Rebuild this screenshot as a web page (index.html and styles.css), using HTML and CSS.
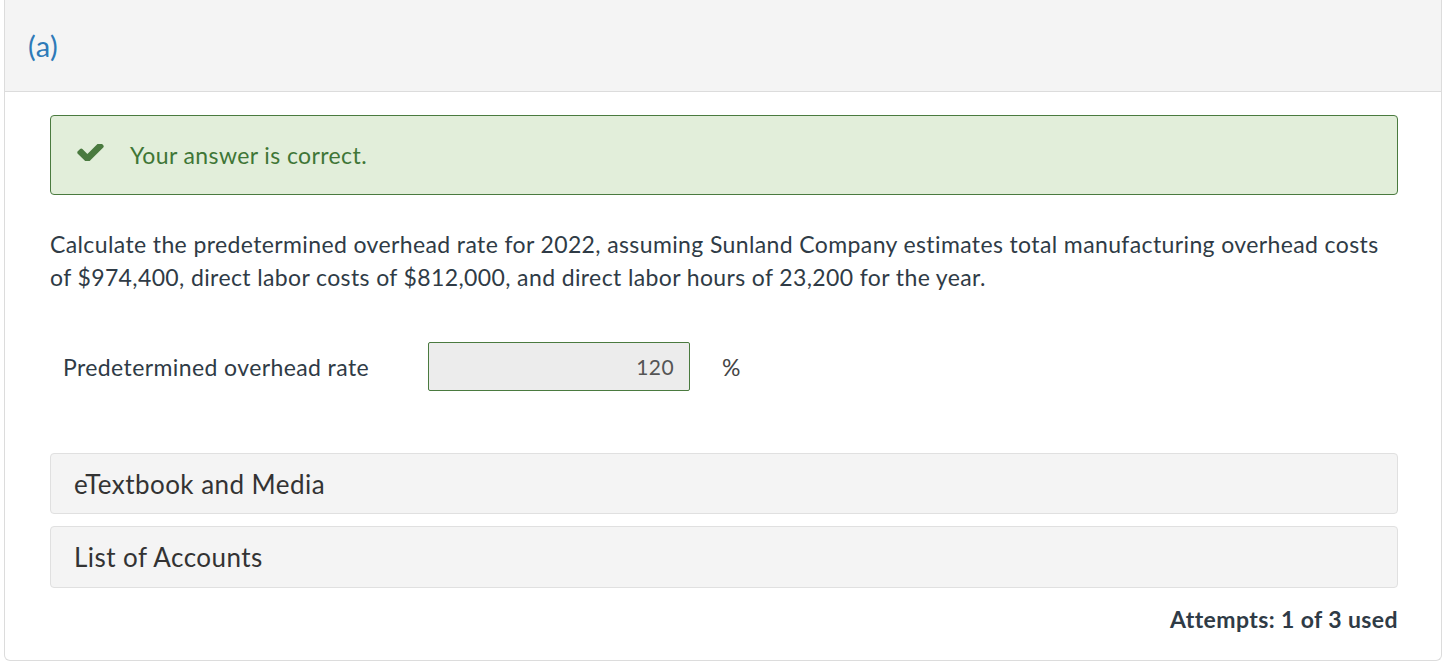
FILE: index.html
```html
<!DOCTYPE html>
<html lang="en">
<head>
<meta charset="utf-8">
<title>Question (a)</title>
<link rel="stylesheet" href="styles.css">
</head>
<body>
<div class="card">
  <div class="card-header">(a)</div>
  <div class="card-body">
    <div class="alert">
      <svg class="check" viewBox="121 430 1550 996" width="27" height="17" aria-hidden="true"><path fill="#4a7a3f" d="M1671 566q0 40-28 68l-724 724-136 136q-28 28-68 28t-68-28l-136-136-362-362q-28-28-28-68t28-68l136-136q28-28 68-28t68 28l294 295 656-657q28-28 68-28t68 28l136 136q28 28 28 68z"/></svg>
      <span class="alert-text">Your answer is correct.</span>
    </div>
    <p class="question">Calculate the predetermined overhead rate for 2022, assuming Sunland Company estimates total manufacturing overhead costs of $974,400, direct labor costs of $812,000, and direct labor hours of 23,200 for the year.</p>
    <div class="answer-row">
      <span class="answer-label">Predetermined overhead rate</span>
      <div class="answer-input">120</div>
      <span class="unit">%</span>
    </div>
    <div class="panel">eTextbook and Media</div>
    <div class="panel">List of Accounts</div>
    <div class="attempts">Attempts: 1 of 3 used</div>
  </div>
</div>
</body>
</html>
```

FILE: styles.css
```css
html, body {
  margin: 0;
  padding: 0;
  background: #ffffff;
}

body {
  font-family: Lato, "Open Sans", sans-serif;
  color: #2f3b46;
  letter-spacing: 0.4px;
}

.card {
  margin: 0 0 0 4px;
  width: 1438px;
  height: 661px;
  box-sizing: border-box;
  border: 1px solid #dcdcdc;
  border-top: none;
  border-radius: 0 0 6px 6px;
  background: #fff;
}

.card-header {
  height: 92px;
  box-sizing: border-box;
  padding: 0 0 0 23px;
  display: flex;
  align-items: center;
  background: #f4f4f4;
  border-bottom: 1px solid #dcdcdc;
  color: #2e7ab8;
  font-size: 29px;
  letter-spacing: 0.5px;
}

.card-body {
  padding: 23px 43px 0 45px;
}

.alert {
  height: 80px;
  box-sizing: border-box;
  display: flex;
  align-items: center;
  padding-left: 25px;
  gap: 26px;
  background: #e2eeda;
  border: 1px solid #4a7a3f;
  border-radius: 4px;
}

.check {
  flex: none;
  margin-top: -6px;
  margin-left: 1px;
}

.alert-text {
  font-size: 23px;
  color: #3f7636;
}

.question {
  margin: 33px 0 0 0;
  font-size: 23px;
  line-height: 33px;
  letter-spacing: 0.38px;
  color: #2f3b46;
}

.answer-row {
  margin-top: 48px;
  display: flex;
  align-items: center;
  padding-left: 13px;
}

.answer-label {
  width: 365px;
  font-size: 23px;
}

.answer-input {
  width: 262px;
  height: 49px;
  box-sizing: border-box;
  display: flex;
  align-items: center;
  justify-content: flex-end;
  padding-right: 15px;
  background: #ececec;
  border: 1px solid #4a7a3f;
  border-radius: 2px;
  font-size: 21px;
  color: #555555;
}

.unit {
  margin-left: 32px;
  font-size: 23px;
  color: #444;
}

.panel {
  margin-top: 62px;
  height: 61px;
  box-sizing: border-box;
  display: flex;
  align-items: center;
  padding-left: 23px;
  background: #f4f4f4;
  border: 1px solid #e0e0e0;
  border-radius: 4px;
  font-size: 26px;
  letter-spacing: 0.45px;
  color: #333333;
}

.panel + .panel {
  margin-top: 12px;
  height: 62px;
}

.attempts {
  margin-top: 15px;
  text-align: right;
  font-size: 23px;
  line-height: 33px;
  font-weight: 700;
  color: #2f3b46;
}
```
